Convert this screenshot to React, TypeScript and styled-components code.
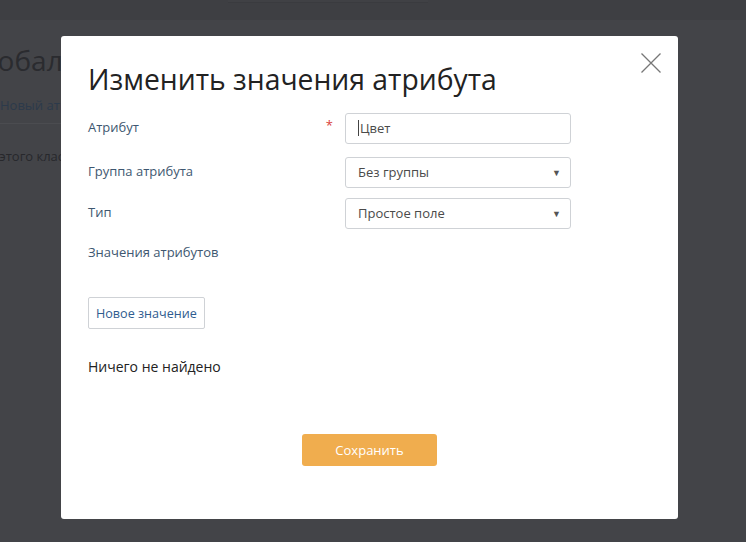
import React from "react";
import styled, { createGlobalStyle } from "styled-components";

const Global = createGlobalStyle`
  html, body { margin: 0; padding: 0; }
  body {
    width: 746px;
    height: 542px;
    overflow: hidden;
    background: #434448;
    font-family: "Open Sans", "Noto Sans", Arial, sans-serif;
  }
`;

const Page = styled.div`
  position: relative;
  width: 746px;
  height: 542px;
  background: #434448;
  overflow: hidden;
`;

const TopBar = styled.div`
  height: 20px;
  background: #3e3f43;
  position: relative;
`;

const TopTab = styled.div`
  position: absolute;
  left: 228px;
  top: 0;
  width: 200px;
  height: 2px;
  background: #404145;
  border-bottom: 1px solid #3a3b3f;
`;

const PageBody = styled.div`
  display: flex;
  flex-direction: column;
  padding-top: 21px;
`;

const PageHeading = styled.div`
  font-size: 28px;
  color: #2a2b2f;
  line-height: 38px;
  height: 48px;
  margin-left: -33px;
  white-space: nowrap;
`;

const PageLink = styled.div`
  font-size: 13px;
  color: #2c3a4b;
  line-height: 18px;
  padding: 7px 0 9px 0;
  border-bottom: 1px solid #4b4c50;
  width: 62px;
  white-space: nowrap;
`;

const PageText = styled.div`
  font-size: 13px;
  color: #27282c;
  padding-top: 23px;
  margin-left: -65px;
  white-space: nowrap;
`;

const Overlay = styled.div`
  position: absolute;
  inset: 0;
  padding: 36px 0 0 61px;
`;

const Modal = styled.div`
  width: 617px;
  height: 483px;
  background: #fff;
  border-radius: 3px;
  box-sizing: border-box;
  padding: 0 27px;
  position: relative;
  display: flex;
  flex-direction: column;
`;

const Close = styled.button`
  position: absolute;
  right: 17px;
  top: 17px;
  width: 20px;
  height: 20px;
  padding: 0;
  border: 0;
  background: transparent;
  display: flex;
  align-items: center;
  justify-content: center;
`;

const Title = styled.h2`
  margin: 24px 0 0;
  font-size: 28.3px;
  font-weight: 400;
  color: #222;
  line-height: 38px;
`;

const Form = styled.div`
  display: flex;
  flex-direction: column;
  margin-top: 14px;
`;

const Row = styled.div<{ $mt?: number }>`
  display: flex;
  align-items: center;
  height: 32px;
  margin-top: ${(p) => p.$mt ?? 0}px;
`;

const LabelCell = styled.div`
  width: 257px;
  display: flex;
  justify-content: space-between;
  align-items: center;
  padding-right: 12px;
  box-sizing: border-box;
  margin-top: -3px;
`;

const Label = styled.label`
  font-size: 13px;
  color: #3e5770;
`;

const Required = styled.span`
  color: #d9403a;
  font-size: 13px;
  position: relative;
  top: -2px;
`;

const Field = styled.div`
  width: 226px;
  height: 31px;
  border: 1px solid #cfd2d6;
  border-radius: 3px;
  box-sizing: border-box;
  display: flex;
  align-items: center;
  padding: 0 9px 0 12px;
  font-size: 13px;
  color: #4a4a4a;
`;

const Caret = styled.span`
  display: inline-block;
  width: 1px;
  height: 16px;
  background: #444;
  margin-right: 1px;
`;

const SelectText = styled.span`
  flex: 1;
`;

const Arrow = styled.span`
  font-size: 9px;
  color: #555;
`;

const SectionLabel = styled(Label)`
  display: block;
  margin-top: 14px;
`;

const NewButton = styled.button`
  margin-top: 36px;
  align-self: flex-start;
  height: 32px;
  padding: 0 7px;
  border: 1px solid #cfd2d6;
  border-radius: 2px;
  background: #fff;
  color: #2f5c8f;
  font-family: inherit;
  font-size: 12.6px;
`;

const Empty = styled.div`
  margin-top: 28px;
  font-size: 14px;
  color: #222;
`;

const Footer = styled.div`
  display: flex;
  justify-content: center;
  margin-top: 58px;
`;

const SaveButton = styled.button`
  width: 135px;
  height: 32px;
  border: 0;
  border-radius: 3px;
  background: #f0ad4e;
  color: #fff;
  font-family: inherit;
  font-size: 13px;
`;

export default function App() {
  return (
    <>
      <Global />
      <Page>
        <TopBar>
          <TopTab />
        </TopBar>
        <PageBody>
          <PageHeading>Глобальные атрибуты</PageHeading>
          <PageLink>Новый атрибут</PageLink>
          <PageText>Атрибуты этого класса</PageText>
        </PageBody>
        <Overlay>
          <Modal>
            <Close aria-label="Закрыть">
              <svg width="20" height="20" viewBox="0 0 20 20">
                <path d="M0.5 0.5 L19.5 19.5 M19.5 0.5 L0.5 19.5" stroke="#777" strokeWidth="1.3" fill="none" />
              </svg>
            </Close>
            <Title>Изменить значения атрибута</Title>
            <Form>
              <Row>
                <LabelCell>
                  <Label>Атрибут</Label>
                  <Required>*</Required>
                </LabelCell>
                <Field>
                  <Caret />
                  Цвет
                </Field>
              </Row>
              <Row $mt={12}>
                <LabelCell>
                  <Label>Группа атрибута</Label>
                </LabelCell>
                <Field>
                  <SelectText>Без группы</SelectText>
                  <Arrow>▼</Arrow>
                </Field>
              </Row>
              <Row $mt={9}>
                <LabelCell>
                  <Label>Тип</Label>
                </LabelCell>
                <Field>
                  <SelectText>Простое поле</SelectText>
                  <Arrow>▼</Arrow>
                </Field>
              </Row>
              <SectionLabel>Значения атрибутов</SectionLabel>
              <NewButton>Новое значение</NewButton>
              <Empty>Ничего не найдено</Empty>
              <Footer>
                <SaveButton>Сохранить</SaveButton>
              </Footer>
            </Form>
          </Modal>
        </Overlay>
      </Page>
    </>
  );
}
